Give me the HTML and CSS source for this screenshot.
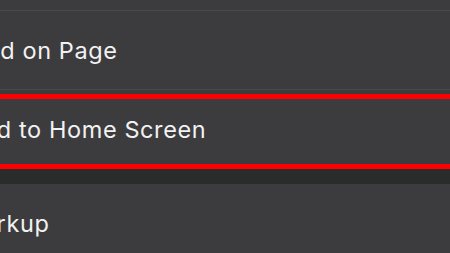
FILE: index.html
```html
<!DOCTYPE html>
<html lang="en">
<head>
    <meta charset="UTF-8">
    <meta name="viewport" content="width=device-width, initial-scale=1.0">
    <title>Share Actions</title>
    <link rel="stylesheet" href="styles.css">
</head>
<body>

<div class="sheet">
    <div class="group">
        <div class="row row-top"></div>
        <div class="row"><span class="label">Find on Page</span></div>
        <div class="row row-marked">
            <span class="label">Add to Home Screen</span>
            <div class="mark"></div>
        </div>
    </div>

    <div class="group">
        <div class="row"><span class="label label-markup">Markup</span></div>
    </div>
</div>

</body>
</html>
```

FILE: styles.css
```css
body {
    margin: 0;
    background-color: #2a2b2b;
    font-family: Inter, "Noto Sans", sans-serif;
    color: #f2f2f2;
    overflow: hidden;
}

.sheet {
    display: flex;
    flex-direction: column;
    gap: 16px;
}

.group {
    background-color: #3c3c3e;
}

.row {
    position: relative;
    display: flex;
    align-items: center;
    height: 78px;
    border-bottom: 1px solid #4a4a4c;
    font-size: 23.5px;
    letter-spacing: 0.6px;
}

.group .row:last-child {
    border-bottom: none;
}

.row-top {
    height: 10px;
}

.label {
    margin-left: -35px;
    white-space: nowrap;
}

.label-markup {
    margin-left: -39px;
}

/* red annotation box drawn over the row */
.mark {
    position: absolute;
    left: -10px;
    right: -10px;
    top: 4px;
    bottom: -1px;
    border-top: 5px solid #ff0000;
    border-bottom: 5px solid #ff0000;
}
```
